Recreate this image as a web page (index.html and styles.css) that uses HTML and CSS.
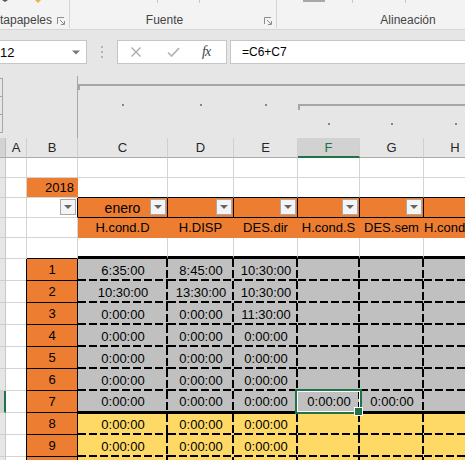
FILE: index.html
```html
<!DOCTYPE html>
<html lang="es">
<head>
  <meta charset="UTF-8" />
  <meta name="viewport" content="width=device-width, initial-scale=1.0"/>
  <title>Horas - Excel</title>
  <link rel="stylesheet" href="styles.css">
</head>
<body>
  <!-- ribbon (bottom of the Inicio tab) -->
  <div class="ribbon">
    <div class="group g-clip">
      <div class="stubs"><i class="tri"></i><i class="brush"></i></div>
      <div class="group-row">
        <span class="group-label">tapapeles</span>
        <svg class="launcher" width="8" height="8" viewBox="0 0 8 8"><path d="M0.5 7V0.5H7" fill="none" stroke="#8c8c8c"/><path d="M3 3L7 7M7.5 4V7.5H4" fill="none" stroke="#8c8c8c"/></svg>
      </div>
    </div>
    <div class="group g-font">
      <div class="stubs"><i class="tick t1"></i><i class="tick t2"></i></div>
      <div class="group-row">
        <span class="group-label">Fuente</span>
        <svg class="launcher" width="8" height="8" viewBox="0 0 8 8"><path d="M0.5 7V0.5H7" fill="none" stroke="#8c8c8c"/><path d="M3 3L7 7M7.5 4V7.5H4" fill="none" stroke="#8c8c8c"/></svg>
      </div>
    </div>
    <div class="group g-align">
      <div class="stubs"><i class="bar"></i><i class="tick t3"></i><i class="tick t4"></i></div>
      <div class="group-row">
        <span class="group-label">Alineación</span>
      </div>
    </div>
  </div>

  <!-- formula bar -->
  <div class="formula-bar">
    <div class="name-box">
      <span class="name-text">12</span>
      <svg width="8" height="5" viewBox="0 0 8 5"><path d="M0 0.5H8L4 4.5Z" fill="#777"/></svg>
    </div>
    <div class="grip"><i></i><i></i><i></i></div>
    <div class="fx-buttons">
      <svg class="btn-cancel" width="12" height="10" viewBox="0 0 12 10"><path d="M1.5 0.5L10.5 9.5M10.5 0.5L1.5 9.5" stroke="#a8a8a8" stroke-width="1.3" fill="none"/></svg>
      <svg class="btn-ok" width="13" height="10" viewBox="0 0 13 10"><path d="M1 5.5L4.5 9L12 1.2" stroke="#b4b4b4" stroke-width="1.7" fill="none"/></svg>
      <span class="fx">fx</span>
    </div>
    <div class="formula-input">=C6+C7</div>
  </div>

  <!-- column outline symbols -->
  <div class="outline">
    <div class="outline-corner">
      <div class="levels"><i></i><i></i><i></i></div>
    </div>
    <div class="bracket lvl1"></div>
    <div class="dot r3 cC"></div>
    <div class="dot r3 cD"></div>
    <div class="dot r3 cE"></div>
    <div class="bracket lvl2"></div>
    <div class="dot r4 cF"></div>
    <div class="dot r4 cG"></div>
    <div class="dot r4 cH"></div>
  </div>

  <!-- sheet -->
  <div class="sheet">
    <div class="corner"></div><div class="col">A</div><div class="col">B</div><div class="col">C</div><div class="col">D</div><div class="col">E</div><div class="col on">F</div><div class="col">G</div><div class="col">H</div>

    <div class="rh"></div><div></div><div></div><div></div><div></div><div></div><div></div><div></div><div></div>

    <div class="rh"></div><div></div><div class="year">2018</div><div class="ab"></div><div class="ab"></div><div class="ab"></div><div class="ab"></div><div class="ab"></div><div class="ab"></div>

    <div class="rh"></div><div></div><div class="bf"><span class="drop"></span></div><div class="flt">enero<span class="drop"></span></div><div class="flt"><span class="drop"></span></div><div class="flt"><span class="drop"></span></div><div class="flt"><span class="drop"></span></div><div class="flt"><span class="drop"></span></div><div class="flt"></div>

    <div class="rh"></div><div></div><div></div><div class="hd">H.cond.D</div><div class="hd">H.DISP</div><div class="hd">DES.dir</div><div class="hd">H.cond.S</div><div class="hd">DES.sem</div><div class="hd cut">H.cond</div>

    <div class="rh"></div><div></div><div class="eb"></div><div class="top"></div><div class="top"></div><div class="top"></div><div class="top"></div><div class="top"></div><div class="top"></div>

    <div class="rh"></div><div></div><div class="n">1</div><div class="t">6:35:00</div><div class="t">8:45:00</div><div class="t">10:30:00</div><div class="t"></div><div class="t"></div><div class="t"></div>
    <div class="rh"></div><div></div><div class="n">2</div><div class="t">10:30:00</div><div class="t">13:30:00</div><div class="t">10:30:00</div><div class="t"></div><div class="t"></div><div class="t"></div>
    <div class="rh"></div><div></div><div class="n">3</div><div class="t">0:00:00</div><div class="t">0:00:00</div><div class="t">11:30:00</div><div class="t"></div><div class="t"></div><div class="t"></div>
    <div class="rh"></div><div></div><div class="n">4</div><div class="t">0:00:00</div><div class="t">0:00:00</div><div class="t">0:00:00</div><div class="t"></div><div class="t"></div><div class="t"></div>
    <div class="rh"></div><div></div><div class="n">5</div><div class="t">0:00:00</div><div class="t">0:00:00</div><div class="t">0:00:00</div><div class="t"></div><div class="t"></div><div class="t"></div>
    <div class="rh"></div><div></div><div class="n">6</div><div class="t">0:00:00</div><div class="t">0:00:00</div><div class="t">0:00:00</div><div class="t"></div><div class="t"></div><div class="t"></div>
    <div class="rh on"></div><div></div><div class="n">7</div><div class="t r7">0:00:00</div><div class="t r7">0:00:00</div><div class="t r7">0:00:00</div><div class="t r7 sel">0:00:00</div><div class="t r7">0:00:00</div><div class="t r7"></div>
    <div class="rh"></div><div></div><div class="n">8</div><div class="t y r8">0:00:00</div><div class="t y r8">0:00:00</div><div class="t y r8">0:00:00</div><div class="t y r8"></div><div class="t y r8"></div><div class="t y r8"></div>
    <div class="rh"></div><div></div><div class="n">9</div><div class="t y">0:00:00</div><div class="t y">0:00:00</div><div class="t y">0:00:00</div><div class="t y"></div><div class="t y"></div><div class="t y"></div>
    <div class="rh"></div><div></div><div class="n"></div><div class="t y"></div><div class="t y"></div><div class="t y"></div><div class="t y"></div><div class="t y"></div><div class="t y"></div>
  </div>
</body>
</html>
```

FILE: styles.css
```css
* {
  box-sizing: border-box;
  margin: 0;
  padding: 0;
}

:root {
  --cols: 6px 21px 51px 90px 66px 64px 62px 64px 63px;
  --grid: #d4d4d4;
  --orange: #ed7d31;
  --green: #217346;
}

body {
  width: 465px;
  height: 460px;
  overflow: hidden;
  font-family: "Liberation Sans", Arial, sans-serif;
  font-size: 13px;
  color: #000;
  background: #fff;
}

/* ribbon */
.ribbon {
  display: flex;
  height: 30px;
  background: #f3f3f3;
  border-bottom: 1px solid #d5d5d5;
}

.group {
  display: flex;
  flex-direction: column;
  flex-shrink: 0;
  height: 28px;
  border-right: 1px solid #d5d5d5;
}

.stubs {
  display: flex;
  align-items: flex-start;
  height: 3px;
}

.stubs i {
  display: block;
}

.tri {
  margin-left: 2px;
  border-left: 3px solid transparent;
  border-right: 3px solid transparent;
  border-top: 2px solid #555;
}

.brush {
  margin-left: 27px;
  border-left: 3.5px solid transparent;
  border-right: 3.5px solid transparent;
  border-top: 3px solid #f0b04a;
}

.tick {
  width: 1px;
  height: 3px;
  background: #c6c6c6;
}

.t1 { margin-left: 87px; }
.t2 { margin-left: 41px; }
.t3 { margin-left: 27px; }
.t4 { margin-left: 52px; }

.bar {
  margin-left: 26px;
  width: 22px;
  height: 2px;
  background: #a8a8a8;
}

.group-row {
  flex: 1;
  display: flex;
  align-items: flex-end;
  padding-bottom: 1px;
}

.group-label {
  font-size: 12px;
  line-height: 14px;
  color: #444;
  white-space: nowrap;
}

.launcher {
  margin-bottom: 2px;
  margin-right: 4px;
}

.g-clip { width: 70px; }
.g-clip .group-label { flex: 1; }

.g-font { width: 207px; }
.g-font .group-label {
  flex: 1;
  text-align: center;
  padding-right: 5px;
}

.g-align { width: 262px; border-right: none; }
.g-align .group-label {
  flex: 1;
  text-align: center;
}

/* formula bar */
.formula-bar {
  display: flex;
  align-items: center;
  height: 37px;
  padding: 10px 0 3px;
  background: #e6e6e6;
}

.name-box {
  display: flex;
  align-items: center;
  justify-content: space-between;
  width: 87px;
  height: 24px;
  padding-right: 6px;
  background: #fff;
  border: 1px solid #c6c6c6;
  border-left: none;
}

.name-text {
  font-size: 13px;
}

.grip {
  display: flex;
  flex-direction: column;
  gap: 3px;
  margin: 0 14px 0 14px;
}

.grip i {
  display: block;
  width: 2px;
  height: 2px;
  background: #b4b4b4;
}

.fx-buttons {
  display: flex;
  align-items: center;
  width: 110px;
  height: 24px;
  padding-left: 12px;
  background: #fff;
  border: 1px solid #c6c6c6;
}

.btn-ok { margin-left: 25px; }

.fx {
  margin-left: 22px;
  font-family: "Liberation Serif", "Times New Roman", serif;
  font-style: italic;
  font-size: 14px;
  letter-spacing: -1px;
  color: #444;
}

.formula-input {
  flex: 1;
  height: 24px;
  margin-left: 3px;
  padding-left: 11px;
  line-height: 22px;
  font-size: 12px;
  background: #fff;
  border: 1px solid #c6c6c6;
  border-right: none;
}

/* outline symbols */
.outline {
  display: grid;
  grid-template-columns: var(--cols);
  grid-template-rows: 9px 19px 19px 19px 5px;
  height: 71px;
  background: #e6e6e6;
}

.outline-corner {
  grid-column: 1 / 4;
  grid-row: 2 / 6;
  border-right: 1px solid #a6a6a6;
}

.levels {
  width: 3px;
  margin-top: 2px;
}

.levels i {
  display: block;
  height: 19px;
  border: 1px solid #a6a6a6;
  border-left: none;
  margin-top: -1px;
}

.levels i:first-child { margin-top: 0; }

.bracket {
  height: 6px;
  border-top: 2px solid #a6a6a6;
  border-left: 2px solid #a6a6a6;
}

.lvl1 {
  grid-column: 4 / 10;
  grid-row: 2;
  margin-top: 8px;
}

.lvl2 {
  grid-column: 7 / 10;
  grid-row: 3;
  margin-top: 9px;
}

.dot {
  width: 2px;
  height: 2px;
  margin-top: 9px;
  justify-self: center;
  background: #858585;
}

.r3 { grid-row: 3; }
.r4 { grid-row: 4; }
.cC { grid-column: 4; }
.cD { grid-column: 5; }
.cE { grid-column: 6; }
.cF { grid-column: 7; }
.cG { grid-column: 8; }
.cH { grid-column: 9; }

/* sheet */
.sheet {
  display: grid;
  grid-template-columns: var(--cols);
  grid-template-rows: 20px 20px 20px 20px 20px 21px repeat(10, 22px);
}

.sheet > div {
  position: relative;
  display: flex;
  align-items: center;
  justify-content: center;
  white-space: nowrap;
  border-right: 1px solid var(--grid);
  border-bottom: 1px solid var(--grid);
}

.sheet > .corner {
  background: #d3d3d3;
  border-right-color: #bdbdbd;
  border-bottom-color: #ababab;
}

.sheet > .col {
  font-size: 13px;
  color: #262626;
  background: #e6e6e6;
  border-right-color: #d0d0d0;
  border-bottom-color: #ababab;
}

.sheet > .col.on {
  color: var(--green);
  background: #d2d2d2;
  border-bottom: 2px solid var(--green);
}

.sheet > .rh {
  background: #e6e6e6;
  border-right-color: #c8c8c8;
  border-bottom-color: #cfcfcf;
}

.sheet > .rh.on {
  background: #d2d2d2;
  border-right: 2px solid var(--green);
}

.sheet > .year {
  justify-content: flex-end;
  padding-right: 3px;
  background: var(--orange);
  border-right-color: var(--orange);
}

.sheet > .ab {
  border-bottom-color: #000;
}

.sheet > .bf {
  border-right-color: #000;
}

.sheet > .flt {
  font-size: 14px;
  background: var(--orange);
  border-right-color: #000;
  border-bottom-color: #000;
}

.drop {
  position: absolute;
  right: 1px;
  top: 1px;
  display: flex;
  align-items: center;
  justify-content: center;
  width: 16px;
  height: 16px;
  background: #f4f4f4;
  border: 1px solid #a9a9a9;
}

.drop::after {
  content: "";
  border-left: 4px solid transparent;
  border-right: 4px solid transparent;
  border-top: 4px solid #666;
}

.sheet > .hd {
  background: var(--orange);
  border-right-color: var(--orange);
  border-bottom-color: var(--orange);
}

.sheet > .hd.cut {
  justify-content: flex-start;
}

.sheet > .eb {
  border-bottom-color: #000;
}

.sheet > .top {
  border-bottom: 3px solid #000;
}

.sheet > .n {
  background: var(--orange);
  border-right-color: #000;
  border-bottom-color: #000;
  box-shadow: -1px 0 0 #000;
}

.sheet > .t {
  border: none;
  background:
    repeating-linear-gradient(180deg, #000 0 8px, transparent 8px 11px) right top / 2px 100% no-repeat,
    repeating-linear-gradient(90deg, #000 0 8px, transparent 8px 11px) left bottom / 100% 2px no-repeat,
    #c0c0c0;
}

.sheet > .t.y {
  background-color: #ffd966;
}

.sheet > .t.r7 {
  border-bottom: 2px solid #000;
  background:
    repeating-linear-gradient(180deg, #000 0 8px, transparent 8px 11px) right top / 2px 100% no-repeat,
    #c0c0c0;
}

.sheet > .t.r8 {
  border-top: 1px solid #000;
}

.sheet > .sel {
  z-index: 2;
}

.sel::before {
  content: "";
  position: absolute;
  left: -3px;
  top: -2px;
  right: -2px;
  bottom: -3px;
  border: 2px solid var(--green);
  box-shadow: inset 0 0 0 1px #fff;
}

.sel::after {
  content: "";
  position: absolute;
  right: -3px;
  bottom: -5px;
  width: 7px;
  height: 7px;
  background: var(--green);
  border: 1px solid #fff;
}
```
